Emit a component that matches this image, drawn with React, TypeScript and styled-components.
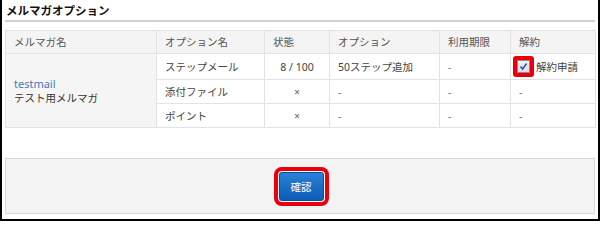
import React from "react";
import styled, { createGlobalStyle } from "styled-components";

const Global = createGlobalStyle`
  html, body { margin: 0; padding: 0; background: #fff; }
  body { font-family: "Noto Sans", "Noto Sans CJK JP", sans-serif; }
  * { box-sizing: border-box; }
`;

const Frame = styled.div`
  width: 600px;
  height: 221px;
  border: 2px solid #000;
  border-top: none;
  padding: 0 3px;
  display: flex;
  flex-direction: column;
  background: #fff;
`;

const Title = styled.h2`
  margin: 0;
  height: 22px;
  padding: 3px 0 0 1px;
  font-size: 11.5px;
  line-height: 16px;
  font-weight: bold;
  color: #111;
  border-bottom: 2px solid #cfcfcf;
`;

const Table = styled.table`
  margin-top: 8px;
  width: 590px;
  border-collapse: collapse;
  table-layout: fixed;
  font-size: 10.5px;
  color: #333;
  border: 1px solid #dedede;
`;

const Th = styled.th<{ $w: number }>`
  width: ${(p) => p.$w}px;
  height: 23px;
  padding: 0 8px;
  text-align: left;
  font-weight: normal;
  color: #555;
  background: #f4f4f4;
  border: 1px solid #e2e2e2;
  line-height: 14px;
`;

const Td = styled.td<{ $center?: boolean; $h?: number }>`
  height: ${(p) => p.$h ?? 24}px;
  padding: 0 8px;
  text-align: ${(p) => (p.$center ? "center" : "left")};
  border: 1px solid #e2e2e2;
  line-height: 14px;
  color: #444;
  white-space: nowrap;
`;

const NameCell = styled.td`
  padding: 0 8px;
  background: #f5f5f5;
  border: 1px solid #e2e2e2;
  line-height: 15px;
  color: #333;
  vertical-align: middle;
`;

const Link = styled.a`
  display: block;
  color: #4a7ab3;
  text-decoration: none;
  font-size: 11px;
`;

const Dash = styled.span`
  color: #777;
`;

const Cross = styled.span`
  color: #666;
  font-family: "Noto Sans", sans-serif;
`;

const CheckLabel = styled.label`
  display: inline-flex;
  align-items: center;
  gap: 2px;
  margin-left: -6px;
`;

const Highlight = styled.span`
  display: inline-flex;
  padding: 4px;
  background: #e8000b;
  border-radius: 3px;
`;

const Box = styled.span`
  width: 13px;
  height: 13px;
  display: inline-flex;
  align-items: center;
  justify-content: center;
  border: 1px solid #8a8a8a;
  background: linear-gradient(#eef2f7, #d9dfe8);
`;

const Footer = styled.div`
  margin-top: 30px;
  height: 56px;
  border: 1px solid #d9d9d9;
  background: #f3f3f3;
  display: flex;
  align-items: center;
  justify-content: center;
`;

const Button = styled.button`
  width: 45px;
  height: 29px;
  margin-left: 2px;
  border: 1px solid #0a4f9e;
  border-radius: 3px;
  background: linear-gradient(#2b82d6, #0b5cb7);
  color: #fff;
  font-family: "Noto Sans CJK JP", sans-serif;
  font-size: 10.5px;
  padding: 0;
  box-shadow: 0 0 0 1px #f6f6f6, 0 0 0 5px #e8000b;
  cursor: pointer;
`;

const rows = [
  { name: "ステップメール", state: "8 / 100", option: "50ステップ追加", term: "-", cancel: true, h: 26 },
  { name: "添付ファイル", state: "×", option: "-", term: "-", cancel: false, h: 24 },
  { name: "ポイント", state: "×", option: "-", term: "-", cancel: false, h: 24 },
];

export default function App() {
  return (
    <>
      <Global />
      <Frame>
        <Title>メルマガオプション</Title>
        <Table>
          <thead>
            <tr>
              <Th $w={151}>メルマガ名</Th>
              <Th $w={108}>オプション名</Th>
              <Th $w={65}>状態</Th>
              <Th $w={110}>オプション</Th>
              <Th $w={71}>利用期限</Th>
              <Th $w={85}>解約</Th>
            </tr>
          </thead>
          <tbody>
            {rows.map((r, i) => (
              <tr key={r.name}>
                {i === 0 && (
                  <NameCell rowSpan={3}>
                    <Link href="#">testmail</Link>
                    テスト用メルマガ
                  </NameCell>
                )}
                <Td $h={r.h}>{r.name}</Td>
                <Td $h={r.h} $center>
                  {r.state === "×" ? <Cross>×</Cross> : r.state}
                </Td>
                <Td $h={r.h}>{r.option === "-" ? <Dash>-</Dash> : r.option}</Td>
                <Td $h={r.h}><Dash>{r.term}</Dash></Td>
                <Td $h={r.h}>
                  {r.cancel ? (
                    <CheckLabel>
                      <Highlight>
                        <Box>
                          <svg width="9" height="9" viewBox="0 0 9 9">
                            <path d="M1.5 4.5 L3.6 7 L7.6 1.5" fill="none" stroke="#2a4fa8" strokeWidth="1.4" />
                          </svg>
                        </Box>
                      </Highlight>
                      解約申請
                    </CheckLabel>
                  ) : (
                    <Dash>-</Dash>
                  )}
                </Td>
              </tr>
            ))}
          </tbody>
        </Table>
        <Footer>
          <Button>確認</Button>
        </Footer>
      </Frame>
    </>
  );
}
